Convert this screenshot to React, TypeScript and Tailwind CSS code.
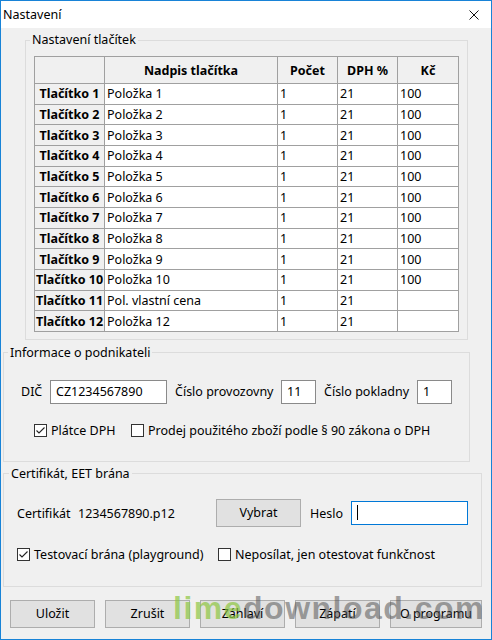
const ROWS = [
  { name: "Tlačítko 1", label: "Položka 1", count: "1", vat: "21", price: "100" },
  { name: "Tlačítko 2", label: "Položka 2", count: "1", vat: "21", price: "100" },
  { name: "Tlačítko 3", label: "Položka 3", count: "1", vat: "21", price: "100" },
  { name: "Tlačítko 4", label: "Položka 4", count: "1", vat: "21", price: "100" },
  { name: "Tlačítko 5", label: "Položka 5", count: "1", vat: "21", price: "100" },
  { name: "Tlačítko 6", label: "Položka 6", count: "1", vat: "21", price: "100" },
  { name: "Tlačítko 7", label: "Položka 7", count: "1", vat: "21", price: "100" },
  { name: "Tlačítko 8", label: "Položka 8", count: "1", vat: "21", price: "100" },
  { name: "Tlačítko 9", label: "Položka 9", count: "1", vat: "21", price: "100" },
  { name: "Tlačítko 10", label: "Položka 10", count: "1", vat: "21", price: "100" },
  { name: "Tlačítko 11", label: "Pol. vlastní cena", count: "1", vat: "21", price: "" },
  { name: "Tlačítko 12", label: "Položka 12", count: "1", vat: "21", price: "" },
];

const BUTTONS = [
  { text: "Uložit", w: "w-[85px]" },
  { text: "Zrušit", w: "w-[85px]" },
  { text: "Záhlaví", w: "w-[85px]" },
  { text: "Zápatí", w: "w-[85px]" },
  { text: "O programu", w: "w-[92px]" },
];

function Checkbox({ checked }: { checked?: boolean }) {
  return (
    <span className="w-[13px] h-[13px] border border-[#333333] bg-white shrink-0 flex items-center justify-center">
      {checked && (
        <svg width="11" height="11" viewBox="0 0 11 11">
          <polyline points="1.5,5.5 4,8 9.5,2.5" fill="none" stroke="#222" strokeWidth="1.1" />
        </svg>
      )}
    </span>
  );
}

function TextBox({ value, className }: { value?: string; className: string }) {
  return (
    <div className={`h-[24px] bg-white border border-[#8a8a8a] pl-[5px] pt-[1px] flex items-center ${className}`}>
      {value}
    </div>
  );
}

function WinButton({ text, className }: { text: string; className: string }) {
  return (
    <div className={`h-[28px] bg-[#e1e1e1] border border-[#adadad] pt-[1px] flex items-center justify-center ${className}`}>
      {text}
    </div>
  );
}

function Cell({ children, className }: { children?: React.ReactNode; className: string }) {
  return (
    <div className={`h-full border-r border-b border-[#a0a0a0] pt-[1px] flex items-center ${className}`}>
      {children}
    </div>
  );
}

function ButtonsTable() {
  return (
    <div className="w-[425px] border-l border-t border-[#a0a0a0] bg-white">
      <div className="flex h-[27px] bg-[#f0f0f0] font-bold">
        <Cell className="w-[70px] justify-center" />
        <Cell className="w-[173px] justify-center">Nadpis tlačítka</Cell>
        <Cell className="w-[60px] justify-center">Počet</Cell>
        <Cell className="w-[60px] justify-center">DPH %</Cell>
        <Cell className="w-[61px] justify-center">Kč</Cell>
      </div>
      {ROWS.map((r, i) => (
        <div key={i} className="flex h-[20.67px]">
          <Cell className="w-[70px] justify-center bg-[#f0f0f0] font-bold">{r.name}</Cell>
          <Cell className="w-[173px] pl-[2px]">{r.label}</Cell>
          <Cell className="w-[60px] pl-[2px]">{r.count}</Cell>
          <Cell className="w-[60px] pl-[2px]">{r.vat}</Cell>
          <Cell className="w-[61px] pl-[2px]">{r.price}</Cell>
        </div>
      ))}
    </div>
  );
}

export default function App() {
  return (
    <div className="relative w-[492px] h-[640px] overflow-hidden border border-[#1883d7] bg-[#f0f0f0] text-black text-[12.5px] leading-[16px] font-['Noto_Sans',sans-serif]">
      <div className="h-[27px] bg-white flex items-center justify-between pl-[2px] pr-[12px] pt-[1px]">
        <span>Nastavení</span>
        <svg width="10" height="10" viewBox="0 0 10 10" className="-mt-[1px]">
          <path d="M0.5 0.5 L9.5 9.5 M9.5 0.5 L0.5 9.5" stroke="#111" strokeWidth="1" />
        </svg>
      </div>

      <div className="flex flex-col">
        <fieldset className="mt-[4px] ml-[24px] w-[443px] border border-[#dcdcdc]">
          <legend className="ml-[4px] px-[2px]">Nastavení tlačítek</legend>
          <div className="pt-[8px] pl-[8px] pb-[7px]">
            <ButtonsTable />
          </div>
        </fieldset>

        <fieldset className="mt-[5px] ml-[2px] w-[467px] border border-[#dcdcdc]">
          <legend className="ml-[4px] px-[2px]">Informace o podnikateli</legend>
          <div className="pt-[19px] pl-[17px] pb-[22px]">
            <div className="flex items-center">
              <span className="w-[29px]">DIČ</span>
              <TextBox value="CZ1234567890" className="w-[117px]" />
              <span className="ml-[8px] w-[106px]">Číslo provozovny</span>
              <TextBox value="11" className="w-[35px]" />
              <span className="ml-[8px] w-[93px]">Číslo pokladny</span>
              <TextBox value="1" className="w-[35px]" />
            </div>
            <div className="mt-[19px] ml-[13px] flex items-center h-[16px]">
              <div className="w-[97px] flex items-center gap-[4px]">
                <Checkbox checked />
                <span>Plátce DPH</span>
              </div>
              <div className="flex items-center gap-[4px]">
                <Checkbox />
                <span>Prodej použitého zboží podle § 90 zákona o DPH</span>
              </div>
            </div>
          </div>
        </fieldset>

        <fieldset className="mt-[4px] ml-[2px] w-[479px] border border-[#dcdcdc]">
          <legend className="ml-[5px] px-[2px]">Certifikát, EET brána</legend>
          <div className="pt-[17px] pl-[13px] pb-[23px]">
            <div className="flex items-center">
              <span className="w-[61px] pt-[2px]">Certifikát</span>
              <span className="w-[138px] pt-[2px]">1234567890.p12</span>
              <WinButton text="Vybrat" className="w-[85px]" />
              <span className="ml-[9px] w-[41px] pt-[2px]">Heslo</span>
              <div className="w-[117px] h-[24px] bg-white border border-[#0078d7] pl-[5px] flex items-center">
                <span className="w-px h-[15px] bg-black" />
              </div>
            </div>
            <div className="mt-[20px] flex items-center h-[16px]">
              <div className="w-[201px] flex items-center gap-[4px]">
                <Checkbox checked />
                <span>Testovací brána (playground)</span>
              </div>
              <div className="flex items-center gap-[4px]">
                <Checkbox />
                <span>Neposílat, jen otestovat funkčnost</span>
              </div>
            </div>
          </div>
        </fieldset>

        <div className="mt-[13px] pl-[9px] flex gap-[10px]">
          {BUTTONS.map((b, i) => (
            <WinButton key={i} text={b.text} className={b.w} />
          ))}
        </div>
      </div>

      <div className="absolute left-[172px] top-[591px] text-[32px] leading-[32px] font-bold tracking-[1.5px] font-['Liberation_Sans',sans-serif] pointer-events-none">
        <span className="text-[#8cc63f]/70">lime</span>
        <span className="text-[#555555]/55">download.com</span>
      </div>
    </div>
  );
}
